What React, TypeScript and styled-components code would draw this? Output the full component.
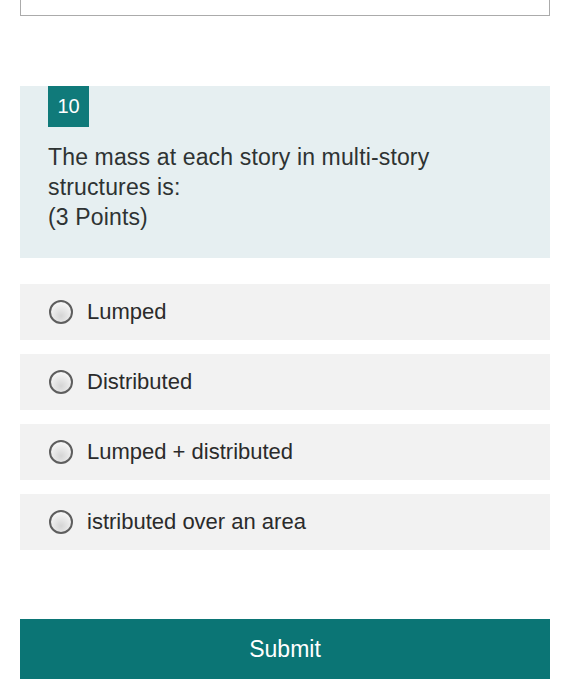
import styled, { createGlobalStyle } from "styled-components";

const GlobalStyle = createGlobalStyle`
    html, body {
        margin: 0;
        padding: 0;
        background: #ffffff;
        font-family: "Liberation Sans", Arial, sans-serif;
    }
`;

const options = ["Lumped", "Distributed", "Lumped + distributed", "istributed over an area"];

const App = () => {
    return (
        <Page>
            <GlobalStyle/>
            <PrevCard/>
            <QuestionCard>
                <Badge>10</Badge>
                <QuestionText>
                    The mass at each story in multi-story<br/>
                    structures is:<br/>
                    (3 Points)
                </QuestionText>
            </QuestionCard>
            <OptionList>
                {options.map((label) => (
                    <Option key={label}>
                        <Radio/>
                        <span>{label}</span>
                    </Option>
                ))}
            </OptionList>
            <SubmitButton>Submit</SubmitButton>
        </Page>
    );
};

export default App;

const Page = styled.div`
    width: 530px;
    padding: 0 20px 0 20px;
    display: flex;
    flex-direction: column;
`;

const PrevCard = styled.div`
    height: 60px;
    margin-top: -44px;
    border: 1px solid #ababab;
    border-top: none;
    box-sizing: border-box;
    width: 530px;
`;

const QuestionCard = styled.div`
    margin-top: 70px;
    background: #e6eff1;
    height: 172px;
    padding: 0 28px;
    box-sizing: border-box;
`;

const Badge = styled.div`
    width: 41px;
    height: 41px;
    background: #107a7a;
    color: #ffffff;
    font-size: 20px;
    display: flex;
    align-items: center;
    justify-content: center;
`;

const QuestionText = styled.div`
    margin-top: 15px;
    color: #2e3333;
    font-size: 23px;
    letter-spacing: 0.15px;
    line-height: 30px;
`;

const OptionList = styled.div`
    margin-top: 26px;
    display: flex;
    flex-direction: column;
    gap: 14px;
`;

const Option = styled.div`
    height: 56px;
    background: #f2f2f2;
    display: flex;
    align-items: center;
    padding-left: 29px;
    gap: 14px;
    color: #2b2b2b;
    font-size: 22px;
`;

const Radio = styled.span`
    width: 24px;
    height: 24px;
    border-radius: 50%;
    box-sizing: border-box;
    border: 2px solid #5e5e5e;
    background: radial-gradient(circle at 50% 70%, #d4d4d4 0%, #f4f4f4 70%, #ffffff 100%);
    flex-shrink: 0;
`;

const SubmitButton = styled.button`
    margin-top: 69px;
    height: 60px;
    border: none;
    background: #0b7575;
    color: #ffffff;
    font-family: "Liberation Sans", Arial, sans-serif;
    font-size: 23px;
    cursor: pointer;
`;
